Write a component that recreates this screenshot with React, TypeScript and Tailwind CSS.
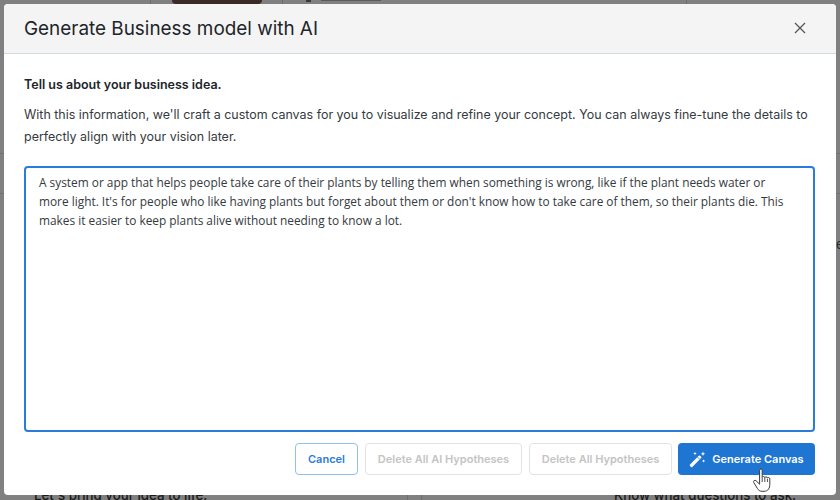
const inter = "font-['Inter','Liberation_Sans',sans-serif]";

const WandIcon = () => (
  <svg width="17" height="17" viewBox="0 0 17 17" className="shrink-0">
    <path d="M1 13.6 9.8 4.8a.9.9 0 0 1 1.3 0l1 1a.9.9 0 0 1 0 1.3l-8.8 8.8a.9.9 0 0 1-1.3 0l-1-1a.9.9 0 0 1 0-1.3Z" fill="#fff" />
    <path d="M8.5 6.1l2.4 2.4" stroke="#1f76d2" strokeWidth="0.8" fill="none" />
    <path d="M14 .6l.6 1.6 1.6.6-1.6.6-.6 1.6-.6-1.6-1.6-.6 1.6-.6ZM6 .8l.5 1.2 1.2.5-1.2.5L6 4.2 5.5 3l-1.2-.5L5.5 2ZM14.6 8.2l.5 1.2 1.2.5-1.2.5-.5 1.2-.5-1.2-1.2-.5 1.2-.5Z" fill="#fff" />
  </svg>
);

// hand pointer that sits over the generate button
const HandCursor = () => (
  <svg width="22" height="26" viewBox="0 0 22 26" className="absolute left-[751px] top-[468px]">
    <path
      d="M8.6 2.2c0-1.6 2.6-1.6 2.6 0v7.2c.2-1.2 2.5-1.2 2.6.2.3-1.1 2.4-1 2.6.4.4-.9 2.3-.7 2.4.8v5.7c0 3.4-1.6 6.8-5.8 6.8H11c-2.3 0-3.6-1.1-4.7-3L2.7 14.4c-.8-1.5 1.2-2.8 2.4-1.6l3.5 3.4Z"
      fill="#fff"
      stroke="#3a3a3a"
      strokeWidth="1"
      strokeLinejoin="round"
    />
    <path d="M11.2 9.6v4.4M13.8 9.8v4.2M16.4 10.8v3.2" stroke="#3a3a3a" strokeWidth="0.9" fill="none" />
  </svg>
);

const Backdrop = () => (
  <div className="absolute inset-0 bg-[#808080] overflow-hidden">
    <div className="flex h-[4px] pl-[150px]">
      <div className="w-px bg-[#6e6e6e]" />
      <div className="ml-[21px] w-[90px] rounded-b-[30px] bg-[#3a2a28]" />
      <div className="ml-[20px] w-px bg-[#6e6e6e]" />
      <div className="ml-[23px] w-[5px] h-[2px] bg-[#3a3a3a]" />
      <div className="ml-[10px] w-[60px] h-[1px] bg-[#5a5a5a]" />
      <div className="ml-[305px] w-px bg-[#6e6e6e]" />
    </div>
    <div className="absolute left-0 top-[153px] w-[4px] h-px bg-[#727272]" />
    <div className="absolute left-0 top-[193px] w-[4px] h-px bg-[#727272]" />
    <div className="absolute right-0 top-[153px] w-[4px] h-px bg-[#727272]" />
    <div className="absolute right-0 top-[193px] w-[4px] h-px bg-[#727272]" />
    <div className="absolute left-[407px] top-[495px] w-px h-[5px] bg-[#6e6e6e]" />
    <div className="absolute left-[421px] top-[495px] w-px h-[5px] bg-[#6e6e6e]" />
    <div className={`${inter} absolute left-[836px] top-[235px] text-[13px] text-[#2a2a2a]`}>e</div>
    <div className={`${inter} absolute left-[34px] top-[486px] text-[13.3px] font-medium text-[#1a1a1a]`}>
      Let's bring your idea to life.
    </div>
    <div className={`${inter} absolute left-[614px] top-[486px] text-[13.3px] font-medium text-[#1a1a1a]`}>
      Know what questions to ask.
    </div>
  </div>
);

export default function App() {
  return (
    <div className="relative w-[840px] h-[500px] overflow-hidden">
      <Backdrop />
      <div className={`${inter} absolute left-[4px] top-[4px] w-[832px] h-[491px] bg-white rounded-[4px] flex flex-col overflow-hidden`}>
        <div className="h-[50px] shrink-0 bg-[#f4f4f4] border-b border-[#d3dce6] flex items-center justify-between pl-[20px] pr-[30px]">
          <h2 className="mt-[2px] text-[18.9px] font-normal text-[#212529]">Generate Business model with AI</h2>
          <svg width="12" height="12" viewBox="0 0 12 12" className="-mt-[2px]">
            <path d="M1 1l10 10M11 1 1 11" stroke="#555" strokeWidth="1.3" fill="none" />
          </svg>
        </div>
        <div className="flex-1 flex flex-col pl-[20px] pr-[21px]">
          <p className="mt-[23px] text-[12.5px] leading-[16px] font-semibold text-[#212529]">Tell us about your business idea.</p>
          <p className="mt-[11px] text-[12.47px] leading-[22px] text-[#343a40]">
            With this information, we'll craft a custom canvas for you to visualize and refine your concept. You can always fine-tune the details to perfectly align with your vision later.
          </p>
          <textarea
            readOnly
            className="mt-[18px] h-[266px] w-full resize-none rounded-[4px] border-2 border-[#2b7cd8] bg-white pl-[13px] pr-[20px] py-[5px] text-[11.87px] leading-[19px] text-[#343a40] outline-none font-['Open_Sans','Noto_Sans',sans-serif]"
            defaultValue="A system or app that helps people take care of their plants by telling them when something is wrong, like if the plant needs water or more light. It's for people who like having plants but forget about them or don't know how to take care of them, so their plants die. This makes it easier to keep plants alive without needing to know a lot."
          />
          <div className="mt-[11px] flex justify-end gap-[7px] text-[11px] font-semibold">
            <button className="h-[32px] w-[63px] rounded-[4px] border border-[#8fc0ee] bg-white text-[#2b7cd8]">Cancel</button>
            <button disabled className="h-[32px] w-[157px] rounded-[4px] border border-[#e3e3e3] bg-white text-[#c4c4c4]">Delete All AI Hypotheses</button>
            <button disabled className="h-[32px] w-[143px] -mr-[1px] rounded-[4px] border border-[#e3e3e3] bg-white text-[#c4c4c4]">Delete All Hypotheses</button>
            <button className="h-[32px] w-[137px] rounded-[4px] bg-[#1f76d2] text-white flex items-center justify-center gap-[6px]">
              <WandIcon />
              Generate Canvas
            </button>
          </div>
        </div>
      </div>
      <HandCursor />
    </div>
  );
}
